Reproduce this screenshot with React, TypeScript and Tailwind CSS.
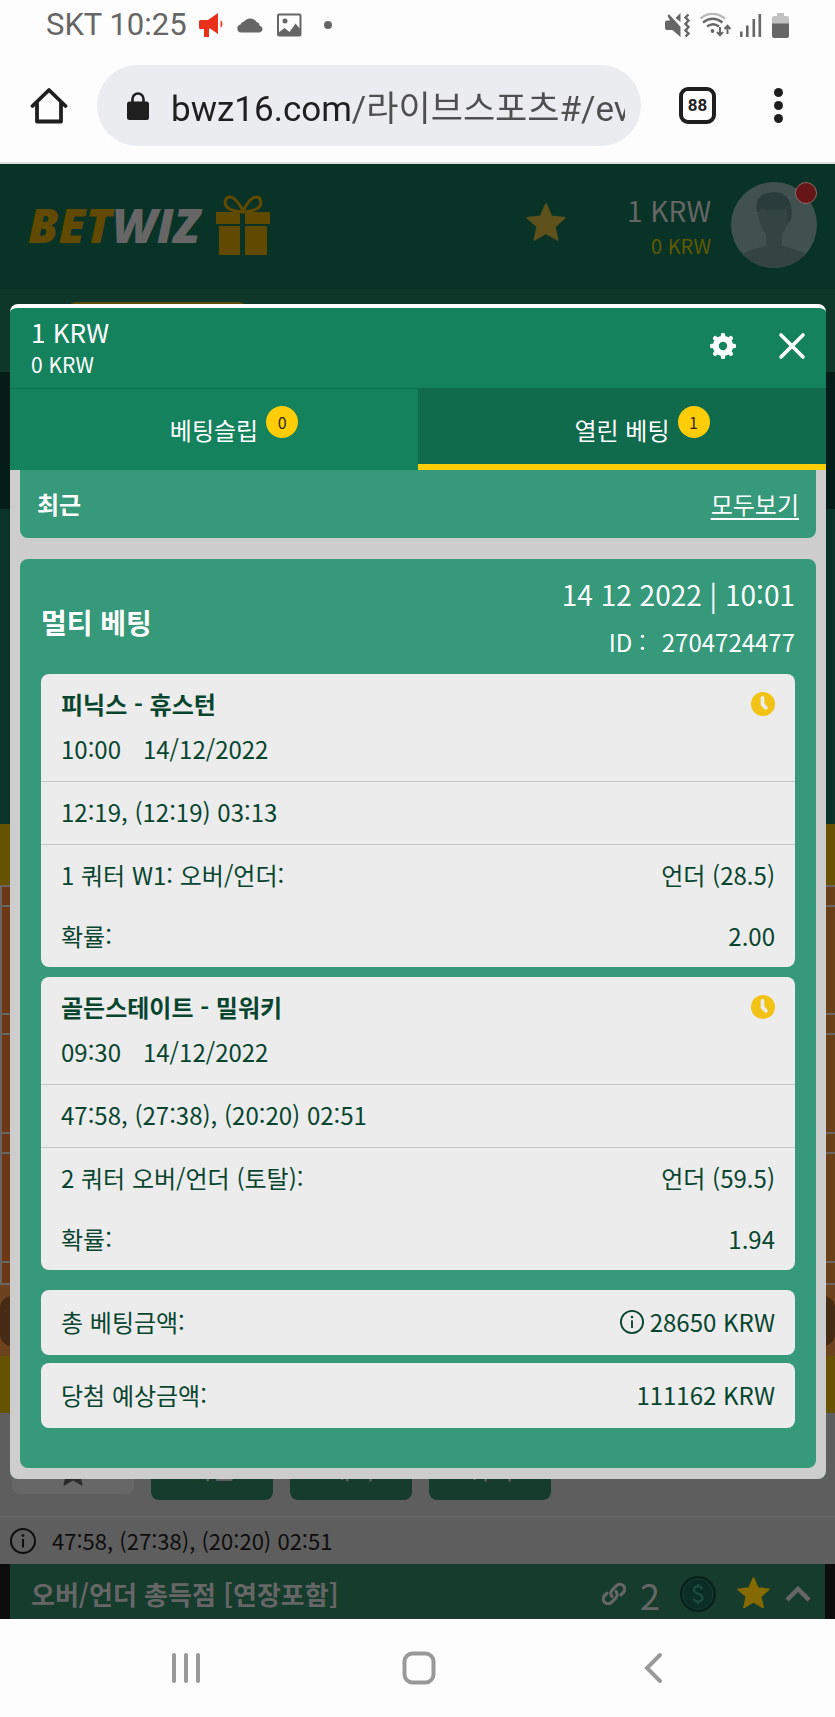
import type { ReactNode } from "react";

type Leg = {
  teams: string;
  time: string;
  date: string;
  score: string;
  market: string;
  pick: string;
  odds: string;
};

const legs: Leg[] = [
  {
    teams: "피닉스 - 휴스턴",
    time: "10:00",
    date: "14/12/2022",
    score: "12:19, (12:19) 03:13",
    market: "1 쿼터 W1: 오버/언더:",
    pick: "언더 (28.5)",
    odds: "2.00",
  },
  {
    teams: "골든스테이트 - 밀워키",
    time: "09:30",
    date: "14/12/2022",
    score: "47:58, (27:38), (20:20) 02:51",
    market: "2 쿼터 오버/언더 (토탈):",
    pick: "언더 (59.5)",
    odds: "1.94",
  },
];

const STAR = "M12 1.2l3.1 7 7.6.8-5.7 5.1 1.6 7.5-6.6-3.8-6.6 3.8L7 14.1 1.3 9l7.6-.8z";

function StarIcon({ className }: { className: string }) {
  return (
    <svg viewBox="0 0 24 24" className={className} fill="currentColor" stroke="currentColor" strokeWidth="1" strokeLinejoin="round">
      <path d={STAR} />
    </svg>
  );
}

function InfoIcon({ className }: { className: string }) {
  return (
    <svg viewBox="0 0 26 26" className={className} fill="none" stroke="currentColor" strokeWidth="2">
      <circle cx="13" cy="13" r="12" />
      <path d="M13 11v8.5" />
      <circle cx="13" cy="7.6" r="1.4" fill="currentColor" stroke="none" />
    </svg>
  );
}

function ClockIcon() {
  return (
    <svg viewBox="0 0 24 24" className="size-6 shrink-0">
      <circle cx="12" cy="12" r="12" fill="#f2c314" />
      <path d="M11.5 6v6.2l3.3 3.6" fill="none" stroke="#ececec" strokeWidth="3.8" strokeLinecap="round" />
    </svg>
  );
}

function StatusBar() {
  return (
    <div className="flex h-[50px] items-center justify-between pr-[46px] pl-[46px] text-[#666]">
      <div className="flex items-center">
        <span className="font-[Roboto] text-[31px] leading-9">SKT 10:25</span>
        <svg viewBox="0 0 26 24" className="ml-3 h-6 w-[26px]" fill="#e8301a">
          <path d="M0 8.5q0-1.5 1.500-1.500H9l10-7v21l-8-5.500h-1V24H5v-8H1.500Q0 16 0 14.500zM21.500 7q4 4 0 8z" />
        </svg>
        <svg viewBox="0 0 27 16" className="ml-3 h-4 w-[27px]" fill="currentColor">
          <path d="M4 15.500a4 4 0 0 1-.5-7.900A4.500 4.500 0 0 1 7 4.500 7.500 7.500 0 0 1 19.500 5c2 .5 3 1.900 3.200 3.700a3.500 3.500 0 0 1 .3 6.800z" />
        </svg>
        <svg viewBox="0 0 25 24" className="ml-[13px] h-6 w-[25px]">
          <rect x="1" y="1.500" width="22.500" height="21" rx="1" fill="none" stroke="currentColor" strokeWidth="2" />
          <path d="M1 20l6.500-5 5 4 6-8.500L24 17v6H1z" fill="currentColor" />
          <circle cx="8" cy="8" r="2.500" fill="currentColor" />
        </svg>
        <span className="ml-[22px] size-2 rounded-full bg-[#666]" />
      </div>
      <div className="flex items-center">
        <svg viewBox="0 0 25 24" className="h-6 w-[25px]" fill="currentColor">
          <path d="M0 9.500q0-2 2-2h3L2.500 2.800 4 1.200l11.500 12.500V24l-8-7H2q-2 0-2-2zM10.500 5l5-5v9z" />
          <path d="M23.500 1.500l-3 3 3 3-3 3.500 3 3-3 3.500 3 3-3 3" fill="none" stroke="currentColor" strokeWidth="2.400" />
        </svg>
        <svg viewBox="0 0 33 24" className="ml-[9px] h-6 w-[33px]" fill="none" stroke="currentColor" strokeWidth="2.400">
          <path d="M1.500 5.500Q13-4 26 5.500" stroke="#b9b9b9" />
          <path d="M4 9.500q9.500-7.500 19.500 0" />
          <path d="M8 13.500q6-4.500 12 0" />
          <circle cx="13.500" cy="18" r="1.900" fill="currentColor" stroke="none" />
          <path d="M21 14v8m-3-3l3 3.200 3-3.200M28.500 21v-8m-3 3l3-3.200 3 3.200" strokeWidth="2" />
        </svg>
        <svg viewBox="0 0 22 24" className="ml-2 h-6 w-[22px]" fill="currentColor">
          <path d="M0 18.500h2.600V24H0zM6 12.500h2.600V24H6zM12.500 6h2.600v18h-2.600zM18.500 1h2.600v23h-2.600z" />
        </svg>
        <svg viewBox="0 0 17 25" className="ml-[10px] h-[25px] w-[17px]">
          <path d="M5 0h7v3h3q2 0 2 2v6H0V5q0-2 2-2h3z" fill="#c2c2c2" />
          <path d="M0 10.500h17V23q0 2-2 2H2q-2 0-2-2z" fill="currentColor" />
        </svg>
      </div>
    </div>
  );
}

function BrowserBar() {
  return (
    <div className="flex items-center border-b-2 border-[#dcdfdc] pt-[15px] pb-4 pl-[30px]">
      <button aria-label="홈">
        <svg viewBox="0 0 38 38" className="size-[38px]" fill="none" stroke="#1f1f1f" strokeWidth="3.800" strokeLinecap="round" strokeLinejoin="round">
          <path d="M2.500 19L19 3l16.500 16M7 16v18.500h24V16" />
        </svg>
      </button>
      <div className="ml-[29px] flex h-[81px] min-w-0 flex-1 items-center rounded-full bg-[#ebecf0] pr-4 pl-[30px]">
        <svg viewBox="0 0 22 28" className="h-7 w-[22px] shrink-0">
          <rect y="9.500" width="22" height="18.500" rx="2.500" fill="#1f1f1f" />
          <path d="M5.500 11V7a5.500 5.500 0 0 1 11 0v4" fill="none" stroke="#1f1f1f" strokeWidth="2.600" />
        </svg>
        <input
          type="text"
          aria-label="주소"
          defaultValue="bwz16.com/라이브스포츠#/event"
          className="ml-[22px] h-14 min-w-0 flex-1 bg-[linear-gradient(90deg,#1f1f1f_182px,#4f4f50_182px)] bg-clip-text font-[Roboto,'Noto_Sans_CJK_KR',sans-serif] text-[35px] text-transparent outline-none"
        />
      </div>
      <button className="ml-[38px] flex size-[37px] items-center justify-center rounded-[9px] border-4 border-[#1f1f1f] font-[Roboto] text-[17px] leading-none font-bold text-[#1f1f1f]">
        88
      </button>
      <button aria-label="메뉴" className="mr-[52px] ml-[58px] flex flex-col gap-1 text-[#1f1f1f]">
        <span className="size-[9px] rounded-full bg-[#1f1f1f]" />
        <span className="size-[9px] rounded-full bg-[#1f1f1f]" />
        <span className="size-[9px] rounded-full bg-[#1f1f1f]" />
      </button>
    </div>
  );
}

function SiteHeader() {
  return (
    <header className="flex h-[125px] items-center bg-[#0a3327] pr-[18px] pb-[3px] pl-7">
      <a href="#home" className="flex items-center">
        <span className="font-['Open_Sans'] text-[48px] leading-none font-extrabold text-[#614900] italic">
          BET<span className="text-[#666]">WIZ</span>
        </span>
        <svg viewBox="0 0 54 60" className="ml-4 h-[60px] w-[54px]" fill="#614900">
          <path d="M0 17h24v12H0zM29 17h25v12H29zM3 31h21v29H3zM29 31h22v29H29z" />
          <path d="M27 16C23 8 19 2 14 2 8 2 8 10 12 13q4 3 15 4 11-1 15-4c4-3 4-11-2-11-5 0-9 6-13 14z" fill="none" stroke="#614900" strokeWidth="3" />
        </svg>
      </a>
      <StarIcon className="mb-1 ml-auto size-[42px] text-[#5f511b]" />
      <div className="ml-[60px] pt-[6px] text-right">
        <div className="text-[28px] leading-9 text-[#666]">1 KRW</div>
        <div className="text-[20px] leading-9 text-[#5f5a00]">0 KRW</div>
      </div>
      <button aria-label="내 계정" className="relative ml-5">
        <svg viewBox="0 0 86 86" className="size-[86px]">
          <clipPath id="avatar">
            <circle cx="43" cy="43" r="43" />
          </clipPath>
          <g clipPath="url(#avatar)">
            <path d="M0 0h86v86H0z" fill="#41514f" />
            <path d="M11 72q10-5 24-8V52Q28 44 27 30q0-16 16-17 16 1 16 17-1 14-8 22v12q14 3 24 8v14H11z" fill="#334443" />
            <path d="M26 30q-4-19 17-20 21 1 17 28l-3 3-1-14q-13 3-26-1l-2 4z" fill="#2a3d3c" />
          </g>
        </svg>
        <span className="absolute top-0 right-0 size-[22px] rounded-full border border-[#8a6a6a] bg-[#661616]" />
      </button>
    </header>
  );
}

function PeriodButton({ children }: { children: ReactNode }) {
  return (
    <button className="flex h-[62px] w-[122px] items-center justify-center rounded-lg bg-[#163c2e] pb-1 text-[26px] text-[#666]">
      {children}
    </button>
  );
}

// Dimmed event page that stays behind the bet slip
function EventPage() {
  return (
    <div className="col-start-1 row-start-1 flex flex-col bg-[#5e5e5e]">
      <SiteHeader />
      <div className="flex h-[83px] items-start bg-[#0e3729] pt-[13px] pl-[68px]">
        <div className="h-12 w-[179px] rounded-t-lg bg-[#5c4c0c]" />
      </div>
      <div className="h-[137px] bg-[#041d16]" />
      <div className="h-[315px] bg-[#0a3428]" />
      <div className="h-[61px] bg-[#665200]" />
      <div className="border-y-2 border-l-2 border-[#6a6561] bg-linear-to-r from-[#6b3716] to-[#683f16]">
        <div className="h-5 border-b-2 border-[#6a6561]" />
        <div className="h-[108px] border-b-2 border-[#6a6561]" />
        <div className="h-5 border-b-2 border-[#6a6561]" />
        <div className="h-[99px] border-b-2 border-[#6a6561]" />
        <div className="h-5 border-b-2 border-[#6a6561]" />
        <div className="h-[109px] border-b-2 border-[#6a6561]" />
        <div className="h-5" />
      </div>
      <div className="flex h-[71px] items-center bg-[#6d431d]">
        <div className="h-[50px] w-full rounded-xl bg-[#452a14]" />
      </div>
      <div className="h-[57px] bg-[#665200]" />
      <div className="flex h-[103px] items-start gap-[17px] pt-[25px] pl-3">
        <button aria-label="즐겨찾기" className="flex h-[56px] w-[122px] items-center justify-center rounded-lg bg-[#676767]">
          <StarIcon className="mt-3 size-8 text-[#2b2b2b]" />
        </button>
        <PeriodButton>기본</PeriodButton>
        <PeriodButton>매치</PeriodButton>
        <PeriodButton>쿼터</PeriodButton>
      </div>
      <div className="flex h-12 items-center gap-4 border-t border-[#6a6a6a] pl-[10px] text-[#0e0e0e]">
        <InfoIcon className="size-[26px]" />
        <span className="text-[22px]">47:58, (27:38), (20:20) 02:51</span>
      </div>
      <div className="bg-[#0d0d0d] px-[10px]">
        <div className="flex h-[55px] items-center bg-[#163c2e] pt-1 pr-[14px] pl-[21px] text-[#666]">
          <h2 className="mr-auto text-[26px] font-bold">오버/언더 총득점 [연장포함]</h2>
          <svg viewBox="0 0 24 24" className="size-6" fill="none" stroke="currentColor" strokeWidth="3.200" strokeLinecap="round">
            <path d="M10 14.500a5 5 0 0 1 .5-6.800l4-4a4.800 4.800 0 0 1 6.800 6.800l-2.300 2.300M14 9.500a5 5 0 0 1-.5 6.800l-4 4a4.800 4.800 0 0 1-6.800-6.800L5 11.200" />
          </svg>
          <span className="ml-[14px] text-[36px] leading-none">2</span>
          <svg viewBox="0 0 36 36" className="ml-5 size-9">
            <circle cx="18" cy="18" r="17" fill="#0a2e25" stroke="#08211a" strokeWidth="2" />
            <circle cx="18" cy="18" r="15" fill="none" stroke="#153a2e" />
            <path d="M22 13q-1-2.500-4-2.500-4 0-4 3.500c0 4.500 8.500 3 8.500 7.500 0 3-2 4-4.500 4-3.500 0-4.500-2.500-4.500-2.500M18 8v2.500M18 25.500V28" fill="none" stroke="#1d4c3f" strokeWidth="2.200" />
          </svg>
          <StarIcon className="ml-5 size-[35px] text-[#856a00]" />
          <button aria-label="접기" className="ml-[14px]">
            <svg viewBox="0 0 26 17" className="h-[17px] w-[26px]" fill="none" stroke="currentColor" strokeWidth="4.500">
              <path d="M2 15L13 4l11 11" />
            </svg>
          </button>
        </div>
      </div>
    </div>
  );
}

function Tab({ label, count, active = false }: { label: string; count: number; active?: boolean }) {
  return (
    <button
      role="tab"
      aria-selected={active}
      className={
        active
          ? "flex h-[82px] flex-1 items-center justify-center border-b-6 border-[#fecd07] bg-[#106b4d] pt-2"
          : "flex h-[82px] flex-1 items-center justify-center border-t border-[#0f7050]"
      }
    >
      <span className="relative text-2xl">
        {label}
        <span className="absolute -top-2 left-full ml-2 flex size-8 items-center justify-center rounded-full bg-[#fecd07] text-base text-[#33290a]">
          {count}
        </span>
      </span>
    </button>
  );
}

function Row({ label, children }: { label: string; children: ReactNode }) {
  return (
    <div className="flex h-[61px] items-center justify-between px-5 pb-[2px]">
      <dt>{label}</dt>
      <dd className="flex items-center gap-[6px]">{children}</dd>
    </div>
  );
}

function LegCard({ leg }: { leg: Leg }) {
  return (
    <article className="rounded-lg bg-[#ececec]">
      <div className="border-b border-[#c6c6c6] px-5 pt-[7px] pb-[9px]">
        <div className="flex h-[45px] items-center justify-between">
          <h3 className="font-bold">{leg.teams}</h3>
          <ClockIcon />
        </div>
        <div className="flex h-[46px] items-center gap-[22px]">
          <span>{leg.time}</span>
          <span>{leg.date}</span>
        </div>
      </div>
      <div className="flex h-[63px] items-center border-b border-[#c6c6c6] px-5 pb-[2px]">{leg.score}</div>
      <dl>
        <Row label={leg.market}>{leg.pick}</Row>
        <Row label="확률:">{leg.odds}</Row>
      </dl>
    </article>
  );
}

function BetSlip() {
  return (
    <section className="z-10 col-start-1 row-start-1 mr-[9px] ml-[10px] mt-[140px] self-start rounded-lg border-t-4 border-white bg-[#15825e] text-white">
      <header className="flex h-20 items-center justify-between pr-5 pb-1 pl-[21px]">
        <div className="pt-1">
          <div className="text-[26px] leading-8">1 KRW</div>
          <div className="text-[21px] leading-8">0 KRW</div>
        </div>
        <div className="flex items-center gap-[42px]">
          <button aria-label="설정">
            <svg viewBox="0 0 26 26" className="size-[26px]">
              <circle cx="13" cy="13" r="7.200" fill="none" stroke="currentColor" strokeWidth="6" />
              <path
                d="M13 2v3M13 21v3M2 13h3M21 13h3M5.200 5.200l2 2M18.800 18.800l2 2M5.200 20.800l2-2M18.800 7.200l2-2"
                stroke="currentColor"
                strokeWidth="4.400"
                strokeLinecap="round"
              />
            </svg>
          </button>
          <button aria-label="닫기">
            <svg viewBox="0 0 28 28" className="size-7" stroke="currentColor" strokeWidth="3.600" strokeLinecap="round">
              <path d="M3 3l22 22M25 3L3 25" />
            </svg>
          </button>
        </div>
      </header>
      <div role="tablist" className="flex">
        <Tab label="베팅슬립" count={0} />
        <Tab label="열린 베팅" count={1} active />
      </div>
      <div className="rounded-b-lg bg-[#cdcdcd] px-[10px] pb-[11px]">
        <div className="flex h-[68px] items-center justify-between rounded-b-lg bg-[#35997a] px-[17px] text-2xl">
          <h2 className="font-bold">최근</h2>
          <a href="#all" className="underline decoration-2 underline-offset-4">
            모두보기
          </a>
        </div>
        <div className="mt-[21px] rounded-lg bg-[#35997a] px-[21px] pb-10">
          <div className="flex items-center justify-between pt-[11px] pb-2">
            <h2 className="pt-2 text-[28px] font-bold">멀티 베팅</h2>
            <div className="text-right">
              <div className="text-[28px] leading-[48px]">14 12 2022 | 10:01</div>
              <div className="flex justify-end gap-4 text-2xl leading-[48px]">
                <span>ID :</span>
                <span>2704724477</span>
              </div>
            </div>
          </div>
          <div className="flex flex-col gap-[10px] text-2xl text-[#08452f]">
            {legs.map((leg) => (
              <LegCard key={leg.teams} leg={leg} />
            ))}
          </div>
          <dl className="mt-5 flex flex-col gap-2 text-2xl text-[#08452f]">
            <div className="rounded-lg bg-[#ececec] py-[2px]">
              <Row label="총 베팅금액:">
                <InfoIcon className="size-6" />
                28650 KRW
              </Row>
            </div>
            <div className="rounded-lg bg-[#ececec] py-[2px]">
              <Row label="당첨 예상금액:">111162 KRW</Row>
            </div>
          </dl>
        </div>
      </div>
    </section>
  );
}

function SystemNav() {
  return (
    <nav className="grid h-[98px] grid-cols-3 items-center justify-items-center pr-[65px] pl-[69px] text-[#999]">
      <button aria-label="최근 앱">
        <svg viewBox="0 0 32 32" className="size-8" stroke="currentColor" strokeWidth="4" strokeLinecap="round">
          <path d="M4 3v26M16 3v26M28 3v26" />
        </svg>
      </button>
      <button aria-label="홈 화면">
        <svg viewBox="0 0 34 34" className="size-[34px]" fill="none" stroke="currentColor" strokeWidth="4">
          <rect x="2.500" y="2.500" width="29" height="29" rx="8" />
        </svg>
      </button>
      <button aria-label="뒤로">
        <svg viewBox="0 0 20 32" className="h-8 w-5" fill="none" stroke="currentColor" strokeWidth="4" strokeLinecap="round">
          <path d="M17 3L4 16l13 13" />
        </svg>
      </button>
    </nav>
  );
}

export default function App() {
  return (
    <div lang="ko" className="flex min-h-screen flex-col bg-[#fdfdfd] font-['Noto_Sans_CJK_KR',sans-serif]">
      <StatusBar />
      <BrowserBar />
      <main className="grid grid-cols-1">
        <EventPage />
        <BetSlip />
      </main>
      <SystemNav />
    </div>
  );
}
